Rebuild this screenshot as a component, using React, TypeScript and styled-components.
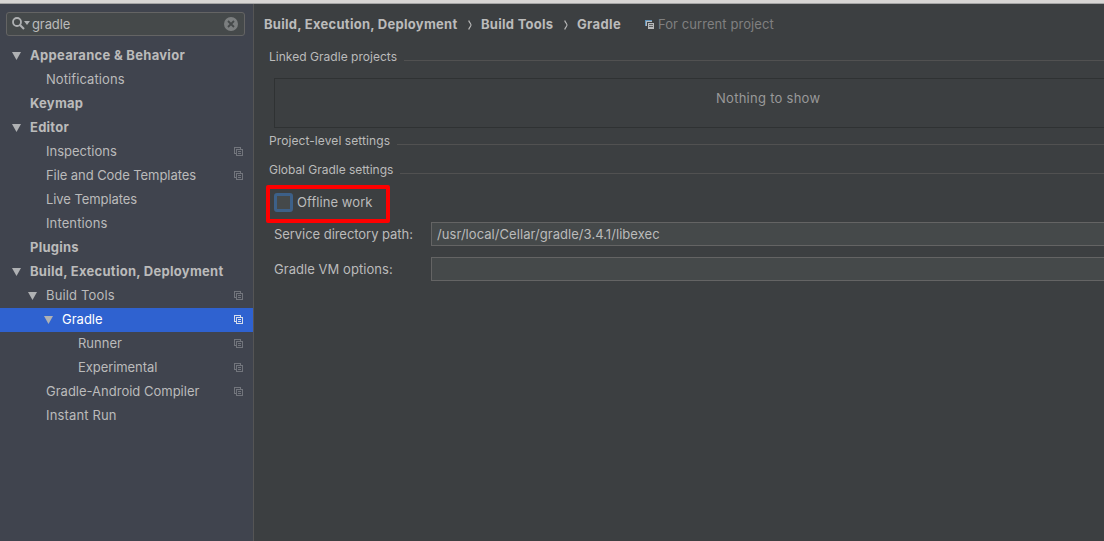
import React from "react";
import styled, { createGlobalStyle } from "styled-components";

const GlobalStyle = createGlobalStyle`
  * { box-sizing: border-box; }
  body { margin: 0; background: #3c3f41; overflow: hidden; }
`;

const Window = styled.div`
  width: 100vw;
  height: 541px;
  display: flex;
  flex-direction: column;
  background: #3c3f41;
  color: #bbbbbb;
  font: 13px/24px Inter, "Liberation Sans", sans-serif;
  white-space: nowrap;
  overflow: hidden;
`;

const TitleEdge = styled.div`
  flex: 0 0 4px;
  background: #d8d6d4;
  border-bottom: 1px solid #a5a5a5;
`;

const Body = styled.div`
  flex: 1;
  display: flex;
  min-height: 0;
`;

const Sidebar = styled.nav`
  flex: 0 0 254px;
  padding-top: 8px;
  background: #40444e;
  border-right: 1px solid #555555;
`;

const SearchField = styled.div`
  display: flex;
  align-items: center;
  width: 239px;
  height: 24px;
  margin: 0 0 8px 6px;
  padding: 0 6px 0 5px;
  border: 1px solid #646464;
  border-radius: 3px;
  background: #45494a;
`;

const SearchText = styled.span`
  flex: 1;
  margin-left: 2px;
  letter-spacing: -0.1px;
`;

const TreeRow = styled.div<{ $depth: number; $selected?: boolean }>`
  display: flex;
  align-items: center;
  height: 24px;
  padding-left: ${(p) => 10 + p.$depth * 16}px;
  padding-right: 10px;
  background: ${(p) => (p.$selected ? "#2f62d0" : "transparent")};
  color: ${(p) => (p.$selected ? "#ffffff" : "#bbbbbb")};
`;

const ArrowSlot = styled.span`
  flex: 0 0 20px;
  display: flex;
  padding-left: 2px;
`;

const Label = styled.span<{ $bold?: boolean; $track?: number }>`
  font-weight: ${(p) => (p.$bold ? 700 : 400)};
  letter-spacing: ${(p) => p.$track ?? 0}px;
`;

const RowLabel = styled(Label)`
  flex: 1;
  padding-bottom: 2px;
  line-height: 22px;
`;

const Content = styled.main`
  flex: 1;
  min-width: 0;
`;

const Breadcrumbs = styled.header`
  display: flex;
  align-items: center;
  height: 24px;
  margin: 8px 0 0 10px;
`;

const Crumb = styled(Label)<{ $width: number }>`
  flex: 0 0 ${(p) => p.$width}px;
  min-width: 0;
`;

const CrumbArrow = styled.svg`
  flex: 0 0 4px;
  margin: 2px 9px 0 11px;
`;

const Scope = styled.div`
  display: flex;
  align-items: center;
  gap: 4px;
  margin-left: 24px;
  color: #808080;
`;

const SectionTitle = styled.div<{ $top: number }>`
  display: flex;
  align-items: center;
  height: 16px;
  margin: ${(p) => p.$top}px 0 0 15px;
  font-size: 12px;
  line-height: 16px;
`;

const Rule = styled.div`
  flex: 1;
  height: 1px;
  margin: 7px 0 0 7px;
  background: #515151;
`;

const ProjectList = styled.div`
  height: 50px;
  margin: 13px 0 0 20px;
  padding: 7px 0 0 441px;
  border: 1px solid #2f3233;
  border-right: 0;
  color: #999999;
`;

const Highlight = styled.div`
  display: flex;
  align-items: center;
  width: 124px;
  height: 38px;
  margin: 7px 0 0 12px;
  padding: 0 0 3px 4px;
  border: 4px solid #ff0000;
  border-radius: 2px;
`;

const Checkbox = styled.span`
  width: 19px;
  height: 19px;
  margin-right: 4px;
  border: 3px solid #3d6088;
  border-radius: 3px;
  background: #45494a;
`;

const CheckboxLabel = styled(Label)`
  padding-bottom: 2px;
  line-height: 22px;
`;

const FormRow = styled.div<{ $gap: number }>`
  display: flex;
  height: 24px;
  margin: ${(p) => p.$gap}px 0 0 20px;
`;

const FormLabel = styled(Label)`
  flex: 0 0 157px;
`;

const TextField = styled.div`
  flex: 1;
  padding-left: 5px;
  border: 1px solid #646464;
  border-right: 0;
  background: #45494a;
  line-height: 22px;
`;

const Arrow = () => (
  <svg width="9" height="8" viewBox="0 0 9 8">
    <path d="M0 0h9L4.5 8z" fill="#afb1b3" />
  </svg>
);

const CopyGlyph = styled.svg<{ $top?: number; $bottom?: number }>`
  flex: none;
  margin-top: ${(p) => p.$top ?? 0}px;
  margin-bottom: ${(p) => p.$bottom ?? 0}px;
`;

const CopyIcon = ({ color }: { color: string }) => (
  <CopyGlyph $bottom={1} width="9" height="9" viewBox="0 0 9 9" fill="none" stroke={color} shapeRendering="crispEdges">
    <path d="M2 6.5H.5v-6h6V2M2.5 2.5h6v6h-6zM4 4.5h3M4 6.5h3" />
  </CopyGlyph>
);

const ScopeIcon = () => (
  <CopyGlyph $top={1} width="9" height="9" viewBox="0 0 9 9" shapeRendering="crispEdges">
    <path d="M0 0h7v1H1v5H0z" fill="#5e94bd" />
    <path d="M1 1h6v1H2v4H1zM3 3h6v6H3z" fill="#b8babb" />
    <path d="M4 4.5h4M4 6.5h4" stroke="#5c5f61" />
  </CopyGlyph>
);

const SearchIcon = () => (
  <svg width="18" height="14" viewBox="0 0 18 14" fill="none">
    <circle cx="5" cy="5" r="4" stroke="#afb1b3" strokeWidth="1.8" />
    <path d="M8 8l4 4" stroke="#afb1b3" strokeWidth="2.2" />
    <path d="M12 4h6l-3 4z" fill="#afb1b3" />
  </svg>
);

const ClearIcon = () => (
  <svg width="14" height="14" viewBox="0 0 14 14">
    <circle cx="7" cy="7" r="7" fill="#7b7e7f" />
    <path d="M4 4l6 6M10 4l-6 6" stroke="#45494a" strokeWidth="1.8" />
  </svg>
);

const Separator = () => (
  <CrumbArrow width="4" height="10" viewBox="0 0 4 10" fill="none">
    <path d="M.7.5C1.3 2.5 3 3.500 3 5S1.300 7.500.7 9.500" stroke="#bbbbbb" strokeWidth="1.1" />
  </CrumbArrow>
);

interface Item {
  text: string;
  depth: number;
  bold?: boolean;
  open?: boolean;
  project?: boolean;
  selected?: boolean;
  track?: number;
}

const items: Item[] = [
  { text: "Appearance & Behavior", depth: 0, bold: true, open: true, track: 0.29 },
  { text: "Notifications", depth: 1, track: 0.08 },
  { text: "Keymap", depth: 0, bold: true, track: 0.25 },
  { text: "Editor", depth: 0, bold: true, open: true, track: 0.25 },
  { text: "Inspections", depth: 1, project: true },
  { text: "File and Code Templates", depth: 1, project: true, track: -0.07 },
  { text: "Live Templates", depth: 1, track: -0.07 },
  { text: "Intentions", depth: 1, track: 0.12 },
  { text: "Plugins", depth: 0, bold: true, track: 0.25 },
  { text: "Build, Execution, Deployment", depth: 0, bold: true, open: true, track: 0.27 },
  { text: "Build Tools", depth: 1, open: true, project: true, track: 0.15 },
  { text: "Gradle", depth: 2, open: true, project: true, selected: true },
  { text: "Runner", depth: 3, project: true },
  { text: "Experimental", depth: 3, project: true, track: -0.07 },
  { text: "Gradle-Android Compiler", depth: 1, project: true },
  { text: "Instant Run", depth: 1, track: 0.15 },
];

export default function App() {
  return (
    <Window>
      <GlobalStyle />
      <TitleEdge />
      <Body>
        <Sidebar>
          <SearchField>
            <SearchIcon />
            <SearchText>gradle</SearchText>
            <ClearIcon />
          </SearchField>
          {items.map((item) => (
            <TreeRow key={item.text} $depth={item.depth} $selected={item.selected}>
              <ArrowSlot>{item.open && <Arrow />}</ArrowSlot>
              <RowLabel $bold={item.bold} $track={item.track}>{item.text}</RowLabel>
              {item.project && <CopyIcon color={item.selected ? "#d5dcec" : "#72757c"} />}
            </TreeRow>
          ))}
        </Sidebar>
        <Content>
          <Breadcrumbs>
            <Crumb $bold $track={0.27} $width={193}>Build, Execution, Deployment</Crumb>
            <Separator />
            <Crumb $bold $track={0.27} $width={72}>Build Tools</Crumb>
            <Separator />
            <Crumb $bold $track={0.35} $width={44}>Gradle</Crumb>
            <Scope>
              <ScopeIcon />
              <Label $track={0.07}>For current project</Label>
            </Scope>
          </Breadcrumbs>
          <SectionTitle $top={13}>
            <Label $track={0.03}>Linked Gradle projects</Label>
            <Rule />
          </SectionTitle>
          <ProjectList>
            <Label $track={0.27}>Nothing to show</Label>
          </ProjectList>
          <SectionTitle $top={5}>
            <Label $track={0.09}>Project-level settings</Label>
            <Rule />
          </SectionTitle>
          <SectionTitle $top={13}>
            <Label $track={-0.03}>Global Gradle settings</Label>
            <Rule />
          </SectionTitle>
          <Highlight>
            <Checkbox />
            <CheckboxLabel $track={0.07}>Offline work</CheckboxLabel>
          </Highlight>
          <FormRow $gap={-1}>
            <FormLabel $track={-0.05}>Service directory path:</FormLabel>
            <TextField>
              <Label $track={0.05}>/usr/local/Cellar/gradle/3.4.1/libexec</Label>
            </TextField>
          </FormRow>
          <FormRow $gap={11}>
            <FormLabel $track={0.05}>Gradle VM options:</FormLabel>
            <TextField />
          </FormRow>
        </Content>
      </Body>
    </Window>
  );
}
